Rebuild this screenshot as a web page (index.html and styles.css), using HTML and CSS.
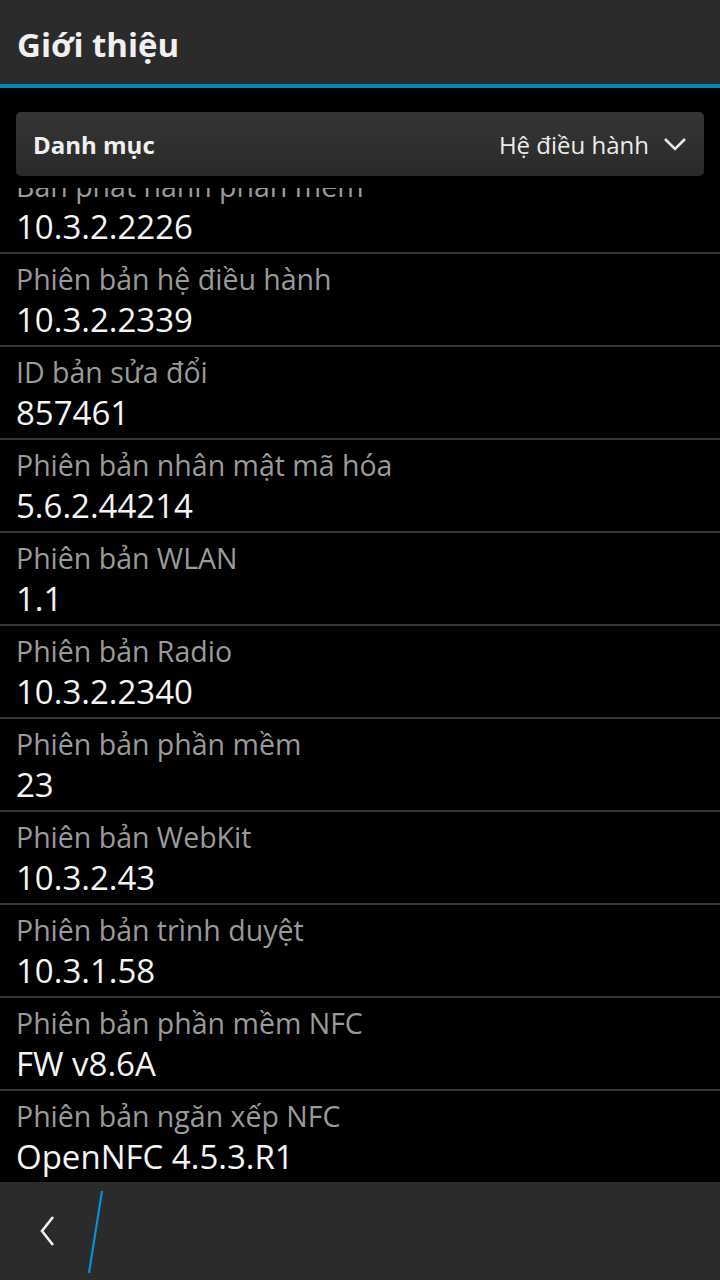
FILE: index.html
```html
<!DOCTYPE html>
<html lang="vi">
<head>
<meta charset="utf-8">
<title>Giới thiệu</title>
<link rel="stylesheet" href="styles.css">
</head>
<body>
<div class="screen">
  <header class="titlebar">
    <h1 class="title">Giới thiệu</h1>
  </header>
  <div class="dropdown-wrap">
    <div class="dropdown">
      <span class="dd-label">Danh mục</span>
      <span class="dd-value">Hệ điều hành
        <svg class="dd-chevron" width="24" height="16" viewBox="0 0 24 16"><path d="M2 3 L12 13 L22 3" fill="none" stroke="#e8e8e8" stroke-width="2.6"/></svg>
      </span>
    </div>
  </div>
  <div class="list-view">
    <div class="list">
      <div class="row"><div class="label">Bản phát hành phần mềm</div><div class="value">10.3.2.2226</div></div>
      <div class="row"><div class="label">Phiên bản hệ điều hành</div><div class="value">10.3.2.2339</div></div>
      <div class="row"><div class="label">ID bản sửa đổi</div><div class="value">857461</div></div>
      <div class="row"><div class="label">Phiên bản nhân mật mã hóa</div><div class="value">5.6.2.44214</div></div>
      <div class="row"><div class="label">Phiên bản WLAN</div><div class="value">1.1</div></div>
      <div class="row"><div class="label">Phiên bản Radio</div><div class="value">10.3.2.2340</div></div>
      <div class="row"><div class="label">Phiên bản phần mềm</div><div class="value">23</div></div>
      <div class="row"><div class="label">Phiên bản WebKit</div><div class="value">10.3.2.43</div></div>
      <div class="row"><div class="label">Phiên bản trình duyệt</div><div class="value">10.3.1.58</div></div>
      <div class="row"><div class="label">Phiên bản phần mềm NFC</div><div class="value">FW v8.6A</div></div>
      <div class="row"><div class="label">Phiên bản ngăn xếp NFC</div><div class="value">OpenNFC 4.5.3.R1</div></div>
    </div>
  </div>
  <footer class="actionbar">
    <button class="back" aria-label="Quay lại">
      <svg width="20" height="34" viewBox="0 0 20 34"><path d="M15 3 L4 17 L15 31" fill="none" stroke="#f0f0f0" stroke-width="2.6"/></svg>
    </button>
    <svg class="slash" width="20" height="84" viewBox="0 0 20 84"><path d="M15 1 L2 83" stroke="#0b8fd3" stroke-width="2.2"/></svg>
  </footer>
</div>
</body>
</html>
```
FILE: styles.css
```css
* { box-sizing: border-box; }
html, body { margin: 0; padding: 0; background: #000; }
body {
  font-family: "Open Sans", "Noto Sans", "DejaVu Sans", sans-serif;
  color: #f2f2f2;
}
.screen {
  width: 720px;
  height: 1280px;
  display: flex;
  flex-direction: column;
  overflow: hidden;
}
.titlebar {
  height: 88px;
  flex: none;
  background: #2b2b2b;
  border-bottom: 4px solid #0d84b6;
  display: flex;
  align-items: center;
  padding: 4px 17px 0;
}
.title {
  margin: 0;
  font-size: 33px;
  font-weight: 700;
  color: #f0f0f0;
  letter-spacing: 0;
}
.dropdown-wrap {
  flex: none;
  padding: 24px 16px 12px;
}
.dropdown {
  height: 64px;
  border-radius: 5px;
  background: linear-gradient(#353535, #2a2a2a);
  display: flex;
  align-items: center;
  justify-content: space-between;
  padding: 0 17px 0 17px;
}
.dd-label {
  font-size: 24px;
  font-weight: 700;
  color: #f0f0f0;
}
.dd-value {
  font-size: 24px;
  color: #ececec;
  display: flex;
  align-items: center;
  gap: 14px;
}
.dd-chevron { display: block; }
.list-view {
  flex: 1;
  overflow: hidden;
}
.list {
  margin-top: -27px;
}
.row {
  height: 93px;
  border-bottom: 2px solid #363636;
  padding: 0 16px;
}
.label {
  font-size: 28.5px;
  line-height: 50px;
  color: #9a9a9a;
  white-space: nowrap;
}
.value {
  font-size: 33px;
  line-height: 32px;
  color: #f5f5f5;
  white-space: nowrap;
}
.actionbar {
  flex: none;
  height: 98px;
  background: #2b2b2b;
  display: flex;
  align-items: center;
  padding-left: 38px;
  gap: 29px;
}
.back {
  background: none;
  border: 0;
  padding: 0;
  display: flex;
}
.slash { display: block; margin-top: 1px; }
```
